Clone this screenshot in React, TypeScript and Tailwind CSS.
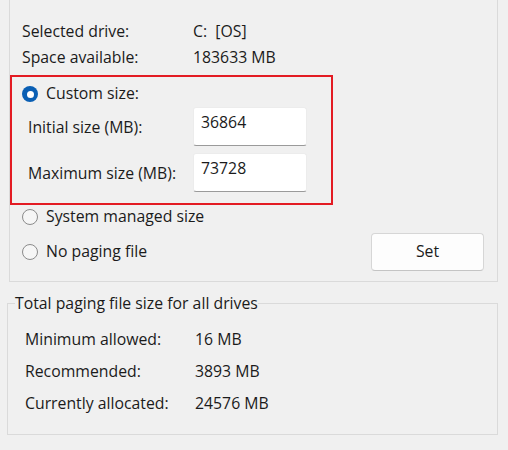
import React from "react";

function Radio({ checked }: { checked?: boolean }) {
  if (checked) {
    return (
      <span className="flex h-[16px] w-[16px] shrink-0 items-center justify-center rounded-full bg-[#0a5fb4]">
        <span className="h-[7px] w-[7px] rounded-full bg-white" />
      </span>
    );
  }
  return (
    <span className="h-[16px] w-[16px] shrink-0 rounded-full border border-[#8b8b8b] bg-[#f6f6f6]" />
  );
}

function Field({ value }: { value: string }) {
  return (
    <div className="h-[39px] w-[114px] rounded-[3px] border border-[#ececec] border-b-[#9a9a9a] bg-white pl-[7px] pt-[3px] leading-[22px]">
      {value}
    </div>
  );
}

export default function App() {
  return (
    <div
      className="h-[450px] w-[508px] overflow-hidden bg-[#f0f0f0] text-[15.8px] text-[#1b1b1b]"
      style={{ fontFamily: '"Open Sans", "Noto Sans", sans-serif' }}
    >
      {/* upper group */}
      <div className="ml-[9px] w-[489px] border-x border-b border-[#dadada] pt-[19px]">
        <div className="flex h-[26px] items-center pl-[12px]">
          <span className="w-[171px]">Selected drive:</span>
          <span>C:&nbsp;&nbsp;[OS]</span>
        </div>
        <div className="flex h-[26px] items-center pl-[12px]">
          <span className="w-[171px]">Space available:</span>
          <span>183633 MB</span>
        </div>

        <div className="mt-[4px] w-[323px] border-2 border-[#e31b23] pb-[11px] pt-[4px]">
          <div className="flex h-[26px] items-center gap-[8px] pl-[10px]">
            <Radio checked />
            <span>Custom size:</span>
          </div>
          <div className="flex items-center pl-[16px]">
            <span className="w-[165px] pt-[3px]">Initial size (MB):</span>
            <Field value="36864" />
          </div>
          <div className="mt-[7px] flex items-center pl-[16px]">
            <span className="w-[165px] pt-[3px]">Maximum size (MB):</span>
            <Field value="73728" />
          </div>
        </div>

        <div className="mt-[1px] flex h-[22px] items-center gap-[8px] pl-[12px]">
          <Radio />
          <span>System managed size</span>
        </div>
        <div className="mt-[5px] flex items-center justify-between pb-[10px] pl-[12px] pr-[13px]">
          <div className="flex items-center gap-[8px]">
            <Radio />
            <span>No paging file</span>
          </div>
          <button className="flex h-[38px] w-[113px] items-center justify-center rounded-[4px] border border-[#d6d6d6] border-b-[#c4c4c4] bg-[#fdfdfd]">
            Set
          </button>
        </div>
      </div>

      {/* lower group */}
      <fieldset className="ml-[7px] mt-[11px] w-[491px] border border-[#dadada] pb-[14px]">
        <legend className="ml-[7px] leading-[20px]">Total paging file size for all drives</legend>
        <div className="pl-[17px] pt-[11px]">
          <div className="flex h-[32px] items-center">
            <span className="w-[170px]">Minimum allowed:</span>
            <span>16 MB</span>
          </div>
          <div className="flex h-[32px] items-center">
            <span className="w-[170px]">Recommended:</span>
            <span>3893 MB</span>
          </div>
          <div className="flex h-[32px] items-center">
            <span className="w-[170px]">Currently allocated:</span>
            <span>24576 MB</span>
          </div>
        </div>
      </fieldset>
    </div>
  );
}
